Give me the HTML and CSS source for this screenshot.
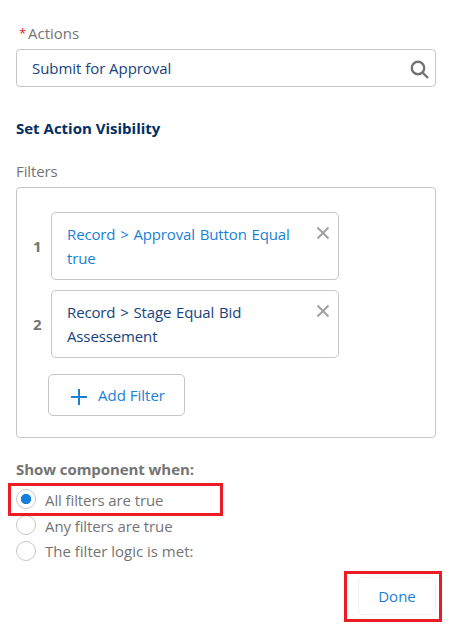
FILE: index.html
```html
<!DOCTYPE html>
<html lang="en">

<head>
    <meta charset="UTF-8">
    <meta name="viewport" content="width=device-width, initial-scale=1.0">
    <title>Set Action Visibility</title>
    <link rel="stylesheet" href="styles.css">
</head>

<body>
    <div class="wrap">
        <div class="label"><span class="required">*</span><span>Actions</span></div>
        <div class="search">
            <span>Submit for Approval</span>
            <svg class="search-icon" width="20" height="20" viewBox="0 0 20 20">
                <circle cx="8" cy="8" r="6.2" />
                <path d="M12.6 12.6L18 18" />
            </svg>
        </div>

        <h3>Set Action Visibility</h3>

        <div class="filters-label">Filters</div>
        <div class="filters">
            <div class="filter">
                <span class="num">1</span>
                <div class="card active">
                    <p>Record &gt; Approval Button Equal<br>true</p>
                    <svg class="close" width="14" height="14" viewBox="0 0 14 14">
                        <path d="M1.5 1.5l11 11M12.5 1.5l-11 11" />
                    </svg>
                </div>
            </div>
            <div class="filter">
                <span class="num">2</span>
                <div class="card">
                    <p>Record &gt; Stage Equal Bid<br>Assessement</p>
                    <svg class="close" width="14" height="14" viewBox="0 0 14 14">
                        <path d="M1.5 1.5l11 11M12.5 1.5l-11 11" />
                    </svg>
                </div>
            </div>
            <button class="add">
                <svg class="plus" width="18" height="18" viewBox="0 0 18 18">
                    <path d="M9 1v16M1 9h16" />
                </svg>
                <span>Add Filter</span>
            </button>
        </div>

        <div class="show">Show component when:</div>
        <div class="options">
            <div class="option marked"><i class="radio checked"></i><span>All filters are true</span></div>
            <div class="option"><i class="radio"></i><span>Any filters are true</span></div>
            <div class="option last"><i class="radio"></i><span>The filter logic is met:</span></div>
        </div>

        <div class="footer">
            <button class="done">Done</button>
        </div>
    </div>
</body>

</html>
```
FILE: styles.css
```css
*,
*::before {
    margin: 0;
    padding: 0;
    box-sizing: border-box;
}

body {
    background-color: #fff;
    font-family: "Open Sans", "Noto Sans", sans-serif;
    font-size: 15px;
    line-height: 24px;
    color: #747474;
}

.wrap {
    width: 452px;
    height: 633px;
    padding: 21px 16px 0;
    overflow: hidden;
    white-space: nowrap;
}

.label {
    display: flex;
    height: 24px;
    padding-left: 3px;
}

.required {
    width: 9px;
    color: #d8202a;
    font-size: 13px;
}

.search {
    display: flex;
    align-items: center;
    justify-content: space-between;
    height: 38px;
    margin-top: 4px;
    padding: 0 5px 0 15px;
    border: 1px solid #c6c6c6;
    border-radius: 4px;
    letter-spacing: -.05px;
    color: #16437e;
}

svg {
    fill: none;
    flex: none;
}

.search-icon {
    margin-top: 3px;
    stroke: #747474;
    stroke-width: 2.4;
}

h3 {
    margin-top: 29px;
    font-size: 15px;
    color: #032e61;
}

.filters-label {
    margin-top: 19px;
    letter-spacing: -.1px;
}

.filters {
    height: 251px;
    margin-top: 4px;
    padding: 24px 0 0 16px;
    border: 1px solid #c6c6c6;
    border-radius: 4px;
}

.filter {
    display: flex;
    align-items: center;
    margin-bottom: 10px;
}

.num {
    width: 18px;
    font-weight: bold;
}

.card {
    display: flex;
    justify-content: space-between;
    width: 288px;
    height: 68px;
    padding: 9px 8px 0 15px;
    border: 1px solid #c6c6c6;
    border-radius: 5px;
    letter-spacing: -.13px;
    word-spacing: 1px;
    color: #16437e;
}

.card.active {
    color: #1b7fd6;
}

.close {
    margin-top: 4px;
    stroke: #a0a0a0;
    stroke-width: 1.9;
}

button {
    display: flex;
    align-items: center;
    background-color: #fff;
    border: 1px solid #c6c6c6;
    border-radius: 5px;
    font: inherit;
    color: #1b7fd6;
}

.add {
    width: 137px;
    height: 42px;
    margin: 16px 0 0 15px;
    padding-left: 21px;
}

.plus {
    margin: 3px 10px 0 0;
    stroke: #1b7fd6;
    stroke-width: 2;
}

.show {
    margin-top: 19px;
    font-weight: bold;
    letter-spacing: -.07px;
}

.options {
    margin-top: 5px;
    letter-spacing: -.1px;
}

.option {
    position: relative;
    display: flex;
    align-items: center;
    height: 26px;
}

.option span {
    padding-top: 2px;
}

.option.last span {
    padding-top: 0;
    letter-spacing: 0;
}

.radio {
    flex: none;
    width: 20px;
    height: 20px;
    margin-right: 9px;
    border: 1px solid #c6c6c6;
    border-radius: 50%;
}

.radio.checked {
    background: radial-gradient(circle, #187edb 4.8px, transparent 5.5px);
}

/* red highlight frames */
.marked::before,
.footer::before {
    content: "";
    position: absolute;
    z-index: 1;
    border: 3px solid #ed1c24;
}

.marked::before {
    left: -8px;
    top: -3px;
    width: 215px;
    height: 33px;
}

.footer {
    position: relative;
    display: flex;
    justify-content: flex-end;
    margin-top: 13px;
}

.footer::before {
    right: -6px;
    top: -6px;
    width: 98px;
    height: 51px;
}

.done {
    justify-content: center;
    width: 78px;
    height: 38px;
    border-color: #f0f0f0;
}
```
